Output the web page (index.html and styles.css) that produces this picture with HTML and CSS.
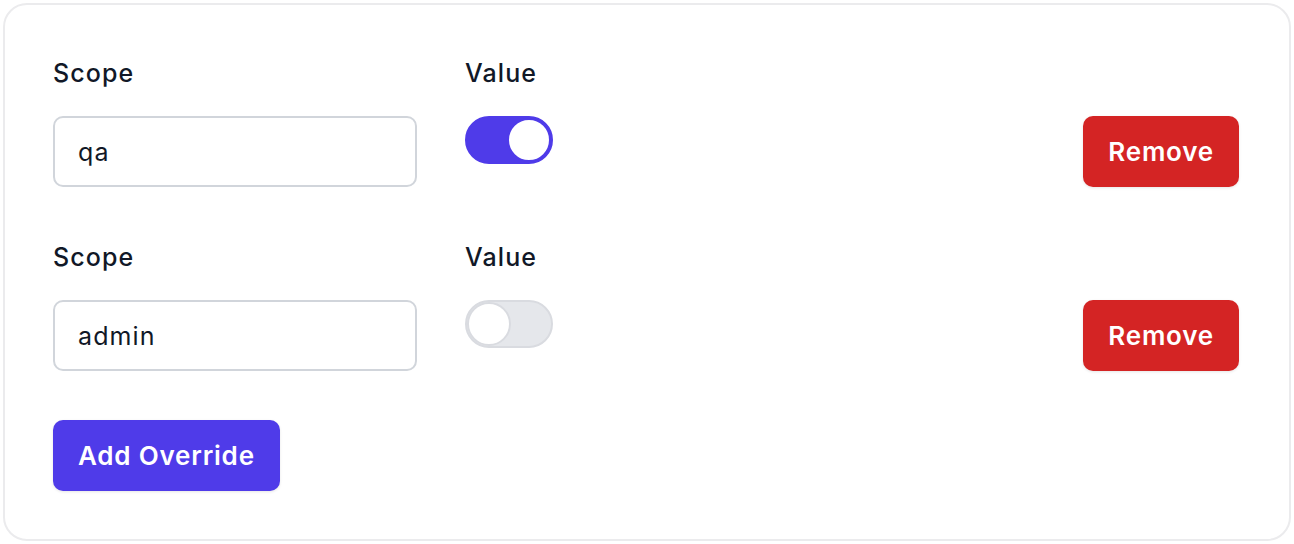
FILE: index.html
```html
<!DOCTYPE html>
<html>
    <head>
        <title>Overrides</title>
        <link rel="stylesheet" href="styles.css">
    </head>
    <body>
        <div class="card">
            <div class="override-row">
                <div class="field">
                    <label class="field-label">Scope</label>
                    <input class="text-input" type="text" value="qa" />
                </div>
                <div class="field">
                    <label class="field-label">Value</label>
                    <button class="toggle is-on" aria-pressed="true"><span class="knob"></span></button>
                </div>
                <div class="actions">
                    <button class="btn btn-danger">Remove</button>
                </div>
            </div>

            <div class="override-row">
                <div class="field">
                    <label class="field-label">Scope</label>
                    <input class="text-input" type="text" value="admin" />
                </div>
                <div class="field">
                    <label class="field-label">Value</label>
                    <button class="toggle" aria-pressed="false"><span class="knob"></span></button>
                </div>
                <div class="actions">
                    <button class="btn btn-danger">Remove</button>
                </div>
            </div>

            <div class="footer">
                <button class="btn btn-primary">Add Override</button>
            </div>
        </div>
    </body>
</html>
```

FILE: styles.css
```css
:root {
    --text-primary: #111827;
    --border-light: #e5e7eb;
    --border-input: #d1d5db;
    --accent-indigo: #4f3be9;
    --accent-red: #d42424;
    --radius: 10px;
}

* {
    box-sizing: border-box;
}

body {
    margin: 0;
    padding: 3px;
    font-family: Inter, "Noto Sans", sans-serif;
    color: var(--text-primary);
    background-color: #ffffff;
}

.card {
    border: 2px solid #ebebed;
    border-radius: 24px;
    padding: 48px;
    display: flex;
    flex-direction: column;
    gap: 50px;
}

.override-row {
    display: grid;
    grid-template-columns: repeat(3, 1fr);
    column-gap: 48px;
}

.field {
    display: flex;
    flex-direction: column;
    align-items: flex-start;
}

.field-label {
    font-size: 25px;
    line-height: 36px;
    font-weight: 500;
    letter-spacing: 1.1px;
    margin-top: 2px;
    margin-bottom: 25px;
}

.text-input {
    width: 100%;
    height: 71px;
    padding: 0 23px;
    border: 2px solid var(--border-input);
    border-radius: var(--radius);
    font-family: inherit;
    font-size: 25px;
    letter-spacing: 1.1px;
    color: var(--text-primary);
    background-color: #ffffff;
}

.text-input:focus {
    outline: none;
    border-color: var(--accent-indigo);
}

.toggle {
    position: relative;
    width: 88px;
    height: 48px;
    padding: 0;
    border: 2px solid #d9dbe0;
    border-radius: 999px;
    background-color: var(--border-light);
    cursor: pointer;
}

.knob {
    position: absolute;
    top: 0;
    left: 0;
    width: 44px;
    height: 44px;
    border: 2px solid #d9dbe0;
    border-radius: 50%;
    background-color: #ffffff;
    transition: transform 0.2s;
}

.toggle.is-on {
    background-color: var(--accent-indigo);
    border-color: var(--accent-indigo);
}

.toggle.is-on .knob {
    transform: translateX(40px);
    border-color: var(--accent-indigo);
}

.actions {
    display: flex;
    justify-content: flex-end;
    align-items: flex-end;
    padding-right: 2px;
}

.btn {
    height: 71px;
    padding: 0 25px;
    border: none;
    border-radius: var(--radius);
    font-family: inherit;
    font-size: 26px;
    font-weight: 600;
    letter-spacing: 0.8px;
    color: #ffffff;
    cursor: pointer;
    box-shadow: 0 1px 3px rgba(0, 0, 0, 0.1);
}

.btn-danger {
    background-color: var(--accent-red);
}

.btn-primary {
    background-color: var(--accent-indigo);
}

.footer {
    margin-top: -1px;
}
```
